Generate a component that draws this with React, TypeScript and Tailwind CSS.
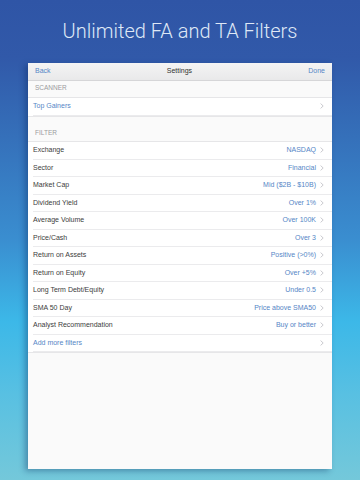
import React from "react";

const rows: [string, string][] = [
  ["Exchange", "NASDAQ"],
  ["Sector", "Financial"],
  ["Market Cap", "Mid ($2B - $10B)"],
  ["Dividend Yield", "Over 1%"],
  ["Average Volume", "Over 100K"],
  ["Price/Cash", "Over 3"],
  ["Return on Assets", "Positive (>0%)"],
  ["Return on Equity", "Over +5%"],
  ["Long Term Debt/Equity", "Under 0.5"],
  ["SMA 50 Day", "Price above SMA50"],
  ["Analyst Recommendation", "Buy or better"],
];

function Chevron() {
  return (
    <svg width="4" height="6" viewBox="0 0 4 6" className="ml-[4px] shrink-0">
      <path d="M0.6 0.6 L3.2 3 L0.6 5.4" fill="none" stroke="#c4c4c9" strokeWidth="0.9" />
    </svg>
  );
}

function Row({ label, value, blueLabel }: { label: string; value?: string; blueLabel?: boolean }) {
  return (
    <div className="h-[17.5px] flex items-center pr-[8px] border-b border-[#ebebed]">
      <span className={`flex-1 ${blueLabel ? "text-[#5586c6]" : "text-[#3c3c3c]"}`}>{label}</span>
      {value && <span className="text-[#5586c6]">{value}</span>}
      <Chevron />
    </div>
  );
}

export default function App() {
  return (
    <div
      className="w-[360px] h-[480px] flex flex-col overflow-hidden bg-[linear-gradient(180deg,#2f55a6_0%,#3159a9_12%,#3a8ed0_50%,#3cb8e8_67%,#58c0e2_82%,#74c8da_100%)]"
      style={{ fontFamily: "'Liberation Sans', Arial, sans-serif" }}
    >
      <div
        className="h-[63px] flex items-center justify-center pb-[1px] text-[20px] font-light text-[#dfe8f6]"
        style={{ fontFamily: "Roboto, 'Liberation Sans', sans-serif" }}
      >
        Unlimited FA and TA Filters
      </div>
      <div className="mx-[28px] w-[304px] h-[406px] bg-[#fafafa] shadow-[-3px_2px_6px_rgba(0,30,80,0.35)] flex flex-col text-[7px]">
        <div className="h-[18px] flex items-center justify-between px-[7px] bg-[linear-gradient(180deg,#f4f4f4,#e9e9ea)] border-b border-[#d6d6d8]">
          <span className="text-[#5586c6]">Back</span>
          <span className="text-[#333333]">Settings</span>
          <span className="text-[#5586c6]">Done</span>
        </div>
        <div className="h-[17px] flex items-end pb-[4px] pl-[7px] text-[#9a9a9e] text-[6.5px] border-b border-[#e6e6e8]">
          SCANNER
        </div>
        <div className="bg-white pl-[5px] border-b border-[#e6e6e8]">
          <Row label="Top Gainers" blueLabel />
        </div>
        <div className="h-[25.5px] flex items-end pb-[3px] pl-[7px] text-[#9a9a9e] text-[6.5px] border-b border-[#e6e6e8]">
          FILTER
        </div>
        <div className="bg-white pl-[5px] border-b border-[#e6e6e8]">
          {rows.map(([l, v]) => (
            <Row key={l} label={l} value={v} />
          ))}
          <Row label="Add more filters" blueLabel />
        </div>
      </div>
    </div>
  );
}
